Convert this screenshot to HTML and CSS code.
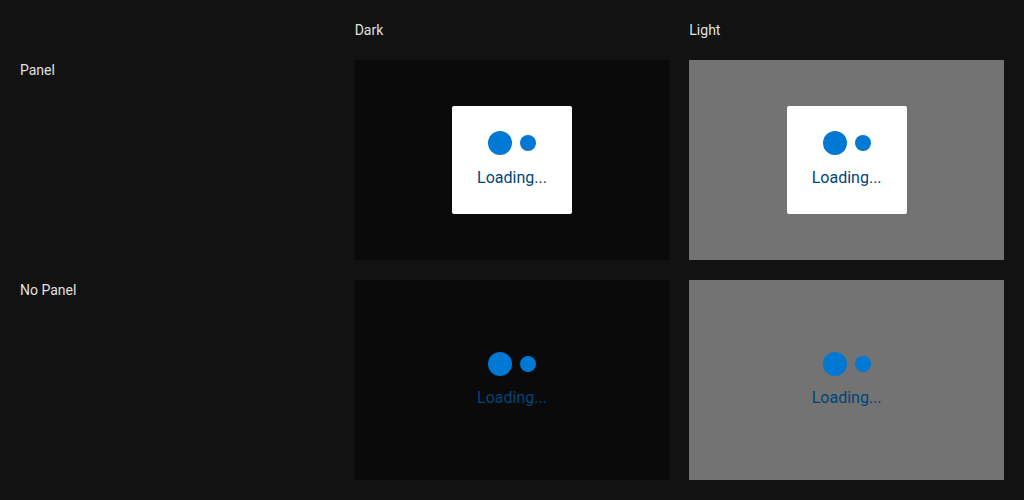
FILE: index.html
```html
<!DOCTYPE html>
<html>
<head>
<meta charset="utf-8">
<link rel="stylesheet" href="styles.css">
</head>
<body>
<div class="grid">
  <div class="label"></div>
  <div class="label">Dark</div>
  <div class="label">Light</div>

  <div class="label">Panel</div>
  <div class="cell dark">
    <div class="panel">
      <div class="dots"><span class="dot big"></span><span class="dot small"></span></div>
      <div class="text">Loading...</div>
    </div>
  </div>
  <div class="cell light">
    <div class="panel">
      <div class="dots"><span class="dot big"></span><span class="dot small"></span></div>
      <div class="text">Loading...</div>
    </div>
  </div>

  <div class="label">No Panel</div>
  <div class="cell dark">
    <div class="nopanel">
      <div class="dots"><span class="dot big"></span><span class="dot small"></span></div>
      <div class="text">Loading...</div>
    </div>
  </div>
  <div class="cell light">
    <div class="nopanel">
      <div class="dots"><span class="dot big"></span><span class="dot small"></span></div>
      <div class="text">Loading...</div>
    </div>
  </div>
</div>
</body>
</html>
```

FILE: styles.css
```css
html, body {
  margin: 0;
  padding: 0;
  background: #121212;
  font-family: Roboto, "Liberation Sans", sans-serif;
}
.grid {
  box-sizing: border-box;
  width: 1024px;
  height: 500px;
  padding: 20px;
  display: grid;
  grid-template-columns: 1fr 1fr 1fr;
  grid-template-rows: 20px 200px 200px;
  gap: 20px;
}
.label {
  color: #e0e0e0;
  font-size: 14px;
  line-height: 20px;
}
.cell {
  display: flex;
  align-items: center;
  justify-content: center;
}
.cell.dark { background: #0a0a0a; }
.cell.light { background: #737373; }
.panel, .nopanel {
  display: flex;
  flex-direction: column;
  align-items: center;
  gap: 12px;
}
.panel {
  background: #ffffff;
  border-radius: 2px;
  width: 120px;
  height: 108px;
  box-sizing: border-box;
  padding-top: 25px;
  gap: 13px;
}
.dots {
  display: flex;
  align-items: center;
  gap: 8px;
  height: 24px;
}
.dot {
  display: block;
  border-radius: 50%;
  background: #0078d4;
}
.dot.big { width: 24px; height: 24px; }
.dot.small { width: 16px; height: 16px; }
.text {
  color: #004578;
  font-size: 16px;
  line-height: 20px;
}
```
